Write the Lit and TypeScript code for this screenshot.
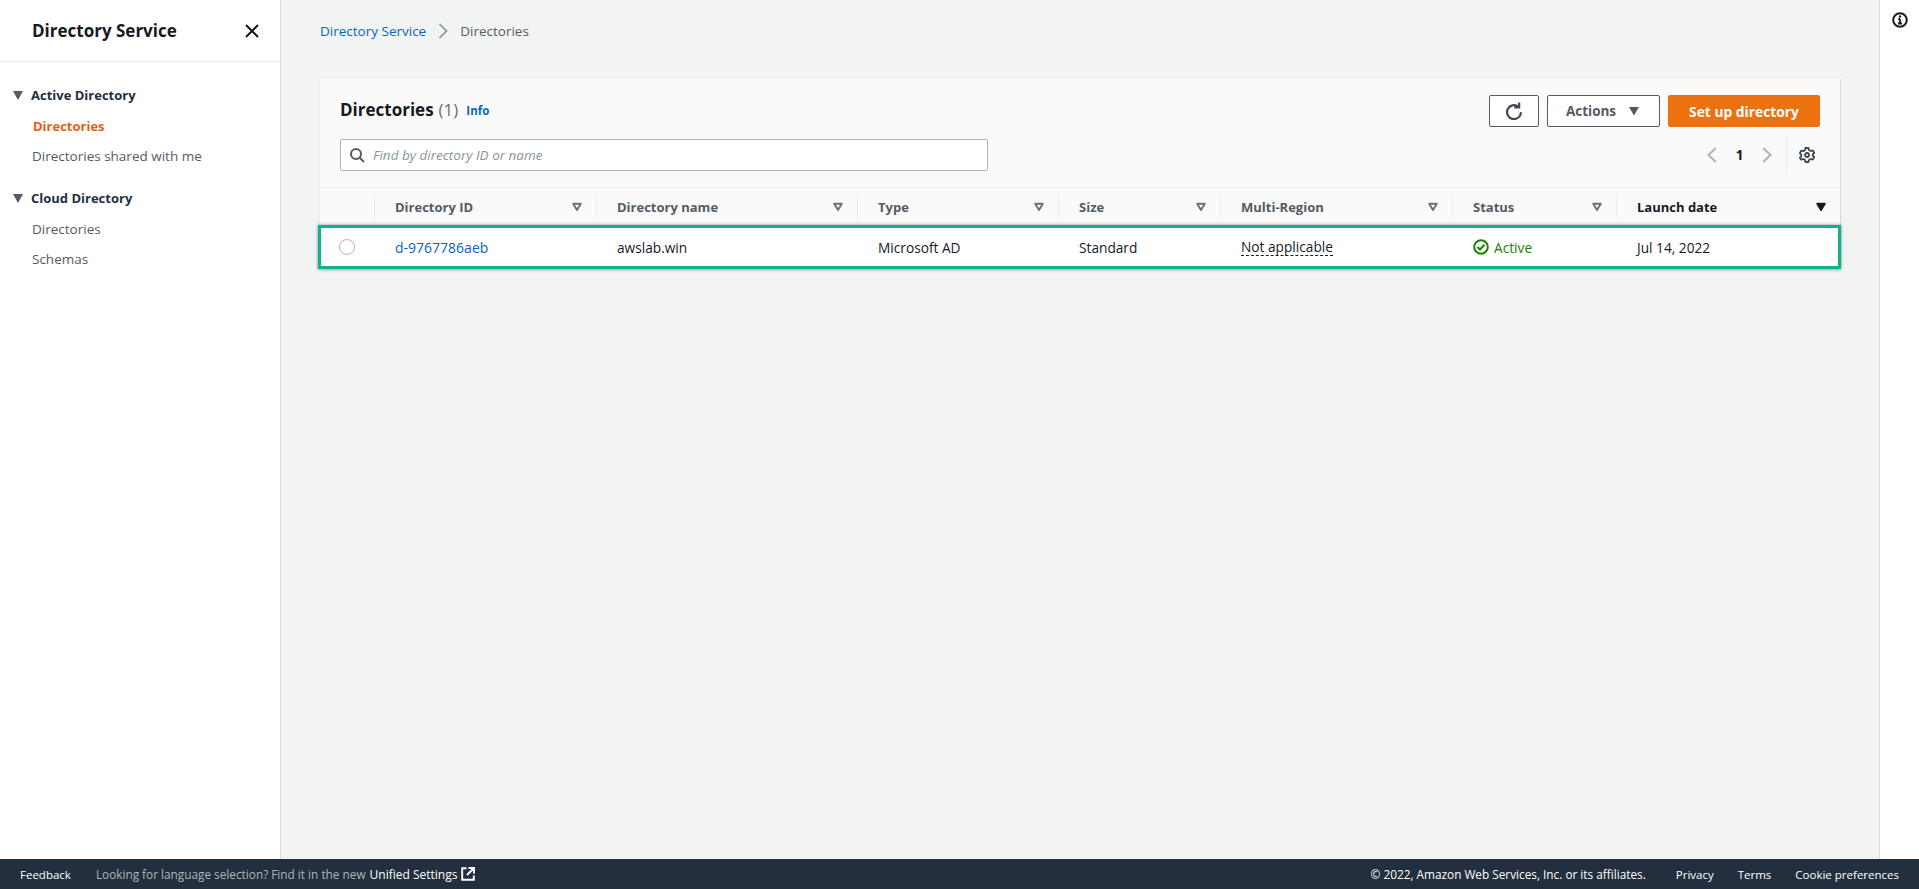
import { LitElement, html, css, svg } from "lit";
import { customElement } from "lit/decorators.js";

const caret = (filled: boolean) => svg`<svg class="sort" viewBox="0 0 16 16" width="16" height="16">
  <path d="M4.200 4.800h7.600L8 11z" fill=${filled ? "#16191f" : "none"} stroke=${filled ? "#16191f" : "#687078"} stroke-width="1.900" stroke-linejoin="round"/></svg>`;

const columns = [
  { label: "Directory ID" },
  { label: "Directory name" },
  { label: "Type" },
  { label: "Size" },
  { label: "Multi-Region" },
  { label: "Status" },
  { label: "Launch date", active: true },
];

@customElement("app-root")
export class AppRoot extends LitElement {
  static styles = css`
    :host {
      display: flex;
      flex-direction: column;
      height: 889px;
      width: 1919px;
      overflow: hidden;
      font-family: "Open Sans", "Liberation Sans", sans-serif;
      font-size: 13.500px;
      color: #16191f;
      background: #f2f3f3;
    }
    a { text-decoration: none; }
    .body { flex: 1; display: flex; min-height: 0; }
    .side { width: 280px; flex: none; background: #fff; border-right: 1px solid #d5dbdb; box-sizing: content-box; }
    .side-head {
      height: 61px; border-bottom: 1px solid #eaeded; display: flex; align-items: center;
      justify-content: space-between; padding: 0 20px 0 32px;
    }
    .side-title { font-size: 17px; font-weight: 700; color: #16191f; }
    .close { display: block; }
    .nav { padding-top: 18px; }
    .group { display: flex; align-items: center; gap: 7px; height: 30px; margin-bottom: 1px; padding-left: 12px; font-size: 13px; font-weight: 700; color: #232f3e; }
    .group svg { flex: none; }
    .item { display: flex; align-items: center; height: 30px; padding-left: 32px; color: #545b64; }
    .item.on { color: #ec5d11; font-size: 13px; font-weight: 700; padding-left: 33px; }
    .gap { height: 12px; }
    .main { flex: 1; min-width: 0; padding: 0 39px; }
    .crumbs { height: 79px; padding-bottom: 17px; box-sizing: border-box; display: flex; align-items: center; gap: 12px; color: #545b64; }
    .crumbs a { color: #0a63c0; }
    .card { background: #fafafa; box-shadow: 1px 0 0 #d5dbdb, 0 -1px 0 #f0f1f1, -1px 0 0 #eaeded; }
    .card-top { height: 108px; padding: 16px 20px 0 20px; box-sizing: border-box; display: grid; grid-template-columns: 1fr auto; grid-template-rows: 32px 32px; row-gap: 12px; }
    .title { display: flex; align-items: center; gap: 8px; font-size: 17px; font-weight: 700; padding-bottom: 4px; }
    .title .count { font-weight: 400; color: #687078; margin-left: -3px; }
    .title a { font-size: 11.500px; font-weight: 700; color: #0a63c0; margin-top: 3px; }
    .actions { display: flex; gap: 8px; }
    .btn {
      height: 32px; box-sizing: border-box; border: 1px solid #545b64; border-radius: 2px; background: #fff;
      color: #545b64; font-weight: 700; display: flex; align-items: center; justify-content: center;
    }
    .btn.refresh { width: 50px; }
    .btn.menu { width: 113px; gap: 11px; }
    .btn.primary { width: 152px; background: #ec7211; border-color: #ec7211; color: #fff; font-size: 13.800px; }
    .search {
      width: 648px; height: 32px; box-sizing: border-box; border: 1px solid #aab7b8; border-radius: 2px; background: #fff;
      display: flex; align-items: center; gap: 8px; padding-left: 8px; color: #879596; font-style: italic;
    }
    .pager { display: flex; align-items: center; height: 32px; color: #16191f; justify-self: end; font-weight: 700; }
    .pager .num { width: 43px; text-align: center; }
    .pager .chev { display: block; }
    .pager .div { width: 1px; height: 40px; background: #eaeded; margin: 0 12px 0 13px; }
    .pager .gear { margin-right: 5px; display: block; }
    .cols { display: grid; grid-template-columns: 54px 222px 261px 201px 162px 232px 164px 224px; }
    .thead { height: 37px; border-top: 1px solid #eaeded; }
    .th { display: flex; align-items: center; justify-content: space-between; padding: 0 11px 0 20px; font-size: 13px; font-weight: 700; color: #545b64; border-left: 1px solid #eaeded; margin: 7px 0 6px; }
    .th:first-child { border-left: 0; }
    .th.active { color: #16191f; }
    .sort { display: block; }
    .row {
      height: 44px; box-sizing: border-box; margin: 0 -1px 0 -2px; background: #fff; border: 3px solid #0db38e;
      box-shadow: 0 1px 3px rgba(0,0,0,.3), 0 -1px 3px rgba(0,0,0,.2);
      grid-template-columns: 53px 222px 261px 201px 162px 232px 164px 221px;
      position: relative;
    }
    .td { display: flex; align-items: center; padding-left: 21px; color: #16191f; font-size: 13.700px; }
    .td a { color: #0a63c0; font-size: 14px; }
    .radio { width: 14px; height: 14px; border: 1px solid #aab7b8; border-radius: 50%; }
    .td.pick { padding-left: 18px; }
    .dash { border-bottom: 1px dashed #16191f; line-height: 17px; }
    .ok { color: #1d8102; gap: 5px; }
    .rail { width: 40px; flex: none; background: #fff; border-left: 1px solid #d5dbdb; box-sizing: border-box; padding: 12px 0 0 12px; }
    .rail svg { display: block; }
    footer {
      height: 30px; flex: none; background: #232f3e; color: #d5dbdb; display: flex; align-items: center;
      font-size: 11.500px; padding: 0 20px; white-space: nowrap;
    }
    footer .w { color: #fff; }
    footer .hint { margin-left: 25px; color: #aab7b8; display: flex; align-items: center; gap: 4px; font-size: 11.800px; }
    footer .hint b { font-weight: 400; color: #fff; font-size: 12px; }
    footer .copy { font-size: 11.800px; }
    footer .spacer { flex: 1; }
    footer .link { margin-left: 24px; }
    footer .link.first { margin-left: 30px; }
  `;

  render() {
    return html`
      <div class="body">
        <aside class="side">
          <div class="side-head">
            <span class="side-title">Directory Service</span>
            <svg class="close" width="16" height="16" viewBox="0 0 16 16"><path d="M2 2l12 12M14 2L2 14" stroke="#16191f" stroke-width="2" fill="none"/></svg>
          </div>
          <nav class="nav">
            <div class="group"><svg width="12" height="12" viewBox="0 0 12 12"><path d="M1 2h10L6 11z" fill="#545b64"/></svg>Active Directory</div>
            <a class="item on">Directories</a>
            <a class="item">Directories shared with me</a>
            <div class="gap"></div>
            <div class="group"><svg width="12" height="12" viewBox="0 0 12 12"><path d="M1 2h10L6 11z" fill="#545b64"/></svg>Cloud Directory</div>
            <a class="item">Directories</a>
            <a class="item">Schemas</a>
          </nav>
        </aside>
        <main class="main">
          <div class="crumbs">
            <a>Directory Service</a>
            <svg width="10" height="16" viewBox="0 0 10 16"><path d="M1.500 1L8.500 8l-7 7" fill="none" stroke="#879596" stroke-width="1.700"/></svg>
            <span>Directories</span>
          </div>
          <section class="card">
            <div class="card-top">
              <div class="title">Directories <span class="count">(1)</span> <a>Info</a></div>
              <div class="actions">
                <div class="btn refresh"><svg width="18" height="18" viewBox="0 0 16 16"><path d="M14.200 9a6.200 6.200 0 1 1-2.500-5M12.600 0.500v4.300H8.300" fill="none" stroke="#414750" stroke-width="1.900"/></svg></div>
                <div class="btn menu">Actions <svg width="14" height="14" viewBox="0 0 14 14"><path d="M2 3h10L7 11.500z" fill="#545b64"/></svg></div>
                <div class="btn primary">Set up directory</div>
              </div>
              <div class="search">
                <svg width="16" height="16" viewBox="0 0 16 16"><circle cx="7" cy="7" r="5" fill="none" stroke="#545b64" stroke-width="2"/><path d="M10.500 10.500L15 15" stroke="#545b64" stroke-width="2"/></svg>
                <span>Find by directory ID or name</span>
              </div>
              <div class="pager">
                <svg class="chev" width="12" height="16" viewBox="0 0 12 16"><path d="M9.800 1L2.500 8l7.300 7" fill="none" stroke="#aab7b8" stroke-width="2"/></svg>
                <span class="num">1</span>
                <svg class="chev" width="12" height="16" viewBox="0 0 12 16"><path d="M2.200 1L9.500 8l-7.300 7" fill="none" stroke="#aab7b8" stroke-width="2"/></svg>
                <span class="div"></span>
                <svg class="gear" width="16" height="16" viewBox="0 0 16 16"><circle cx="8" cy="8" r="2" fill="none" stroke="#414750" stroke-width="1.800"/><path d="M6.500 1h3l.5 2 1.800 1 2-.6 1.400 2.600-1.500 1.400v1.200l1.500 1.400-1.400 2.600-2-.6-1.800 1-.5 2h-3l-.5-2-1.800-1-2 .6L.8 10.800l1.500-1.400V7.600L.8 6.200 2.200 3.600l2 .6L6 3.200z" fill="none" stroke="#414750" stroke-width="1.800" stroke-linejoin="round"/></svg>
              </div>
            </div>
            <div class="cols thead">
              <div class="th"></div>
              ${columns.map((c) => html`<div class="th ${c.active ? "active" : ""}"><span>${c.label}</span>${caret(!!c.active)}</div>`)}
            </div>
            <div class="cols row">
              <div class="td pick"><span class="radio"></span></div>
              <div class="td"><a>d-9767786aeb</a></div>
              <div class="td">awslab.win</div>
              <div class="td">Microsoft AD</div>
              <div class="td">Standard</div>
              <div class="td"><span class="dash">Not applicable</span></div>
              <div class="td ok">
                <svg width="16" height="16" viewBox="0 0 16 16"><circle cx="8" cy="8" r="6.800" fill="none" stroke="#1d8102" stroke-width="2"/><path d="M4.500 8l2.500 2.500 4.500-4.800" fill="none" stroke="#1d8102" stroke-width="2"/></svg>
                Active
              </div>
              <div class="td">Jul 14, 2022</div>
            </div>
          </section>
        </main>
        <aside class="rail">
          <svg width="16" height="16" viewBox="0 0 16 16"><circle cx="8" cy="8" r="6.800" fill="none" stroke="#16191f" stroke-width="2"/><path d="M8 7v4.500M6 11.500h4M6.300 7H8" fill="none" stroke="#16191f" stroke-width="1.800"/><circle cx="8" cy="4.500" r="1.200" fill="#16191f"/></svg>
        </aside>
      </div>
      <footer>
        <span class="w">Feedback</span>
        <span class="hint">Looking for language selection? Find it in the new <b>Unified Settings</b>
          <svg width="14" height="14" viewBox="0 0 14 14"><path d="M5.500 1.200H1.200v11.600h11.600V8.500M7.500 1H13v5.500M13 1L6 8" fill="none" stroke="#fff" stroke-width="1.900"/></svg>
        </span>
        <span class="spacer"></span>
        <span class="w copy">© 2022, Amazon Web Services, Inc. or its affiliates.</span>
        <span class="w link first">Privacy</span>
        <span class="w link">Terms</span>
        <span class="w link">Cookie preferences</span>
      </footer>
    `;
  }
}
